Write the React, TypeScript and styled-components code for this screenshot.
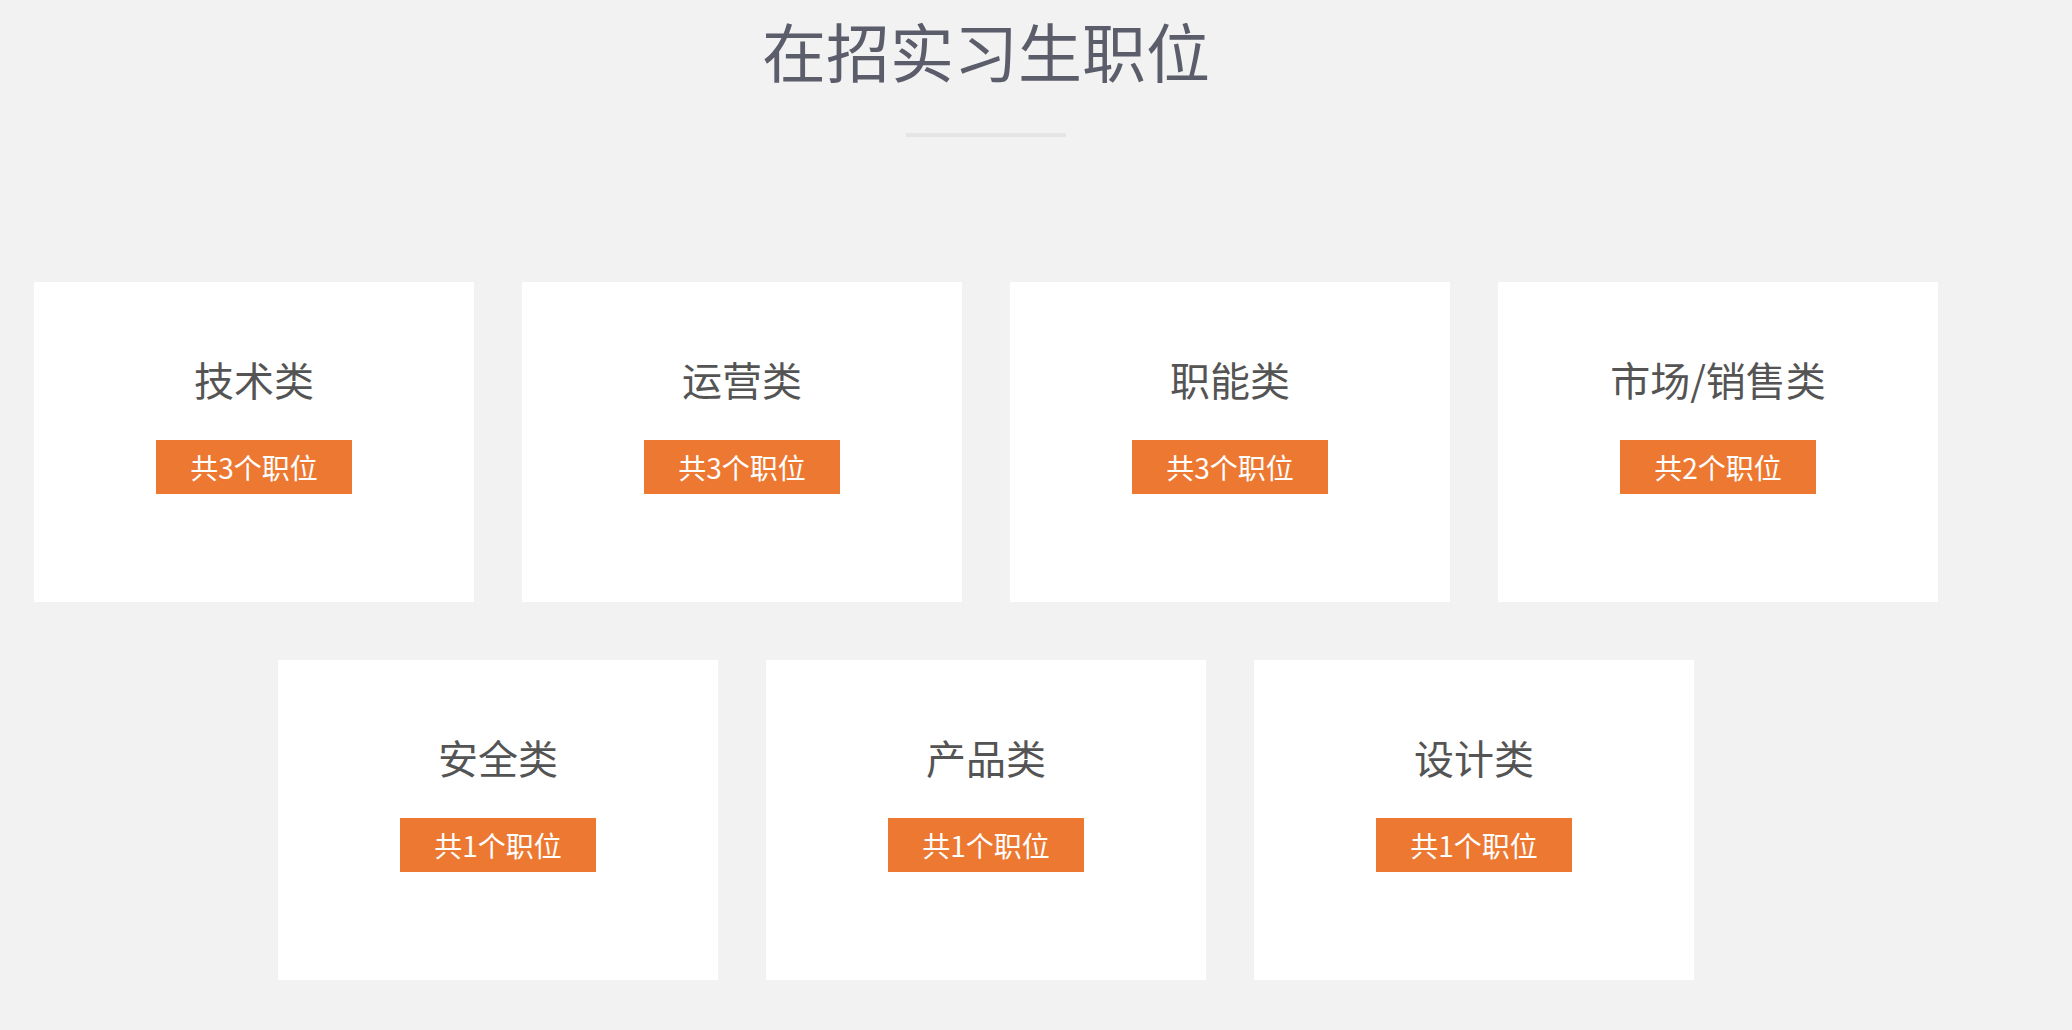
import styled, { createGlobalStyle } from "styled-components";

const categories = [
  { name: "技术类", count: 3 },
  { name: "运营类", count: 3 },
  { name: "职能类", count: 3 },
  { name: "市场/销售类", count: 2 },
  { name: "安全类", count: 1 },
  { name: "产品类", count: 1 },
  { name: "设计类", count: 1 },
];

const App = () => {
  return (
    <Page>
      <GlobalStyle />
      <Title>在招实习生职位</Title>
      <Divider />
      <CardList>
        {categories.map((item) => (
          <Card key={item.name}>
            <CardTitle>{item.name}</CardTitle>
            <CountBadge>共{item.count}个职位</CountBadge>
          </Card>
        ))}
      </CardList>
    </Page>
  );
};

export default App;

const GlobalStyle = createGlobalStyle`
  html, body {
    margin: 0;
    padding: 0;
    background: #f2f2f2;
  }
  body {
    font-family: "Noto Sans CJK SC", "Noto Sans", sans-serif;
  }
`;

const Page = styled.div`
  width: 1972px;
  padding-top: 4px;
`;

const Title = styled.h1`
  margin: 0;
  font-size: 64px;
  line-height: 90px;
  font-weight: 400;
  text-align: center;
  color: #5b5e6a;
`;

const Divider = styled.div`
  width: 160px;
  height: 4px;
  margin: 39px auto 0;
  background: #e5e5e5;
`;

const CardList = styled.div`
  display: flex;
  flex-wrap: wrap;
  justify-content: center;
  gap: 58px 48px;
  margin-top: 145px;
`;

const Card = styled.div`
  display: flex;
  flex-direction: column;
  align-items: center;
  box-sizing: border-box;
  width: 440px;
  height: 320px;
  padding-top: 72px;
  background: #ffffff;
`;

const CardTitle = styled.div`
  font-size: 40px;
  line-height: 50px;
  color: #545454;
`;

const CountBadge = styled.div`
  margin-top: 36px;
  padding: 0 34px;
  font-size: 28px;
  line-height: 54px;
  color: #ffffff;
  background: #ed7832;
`;
